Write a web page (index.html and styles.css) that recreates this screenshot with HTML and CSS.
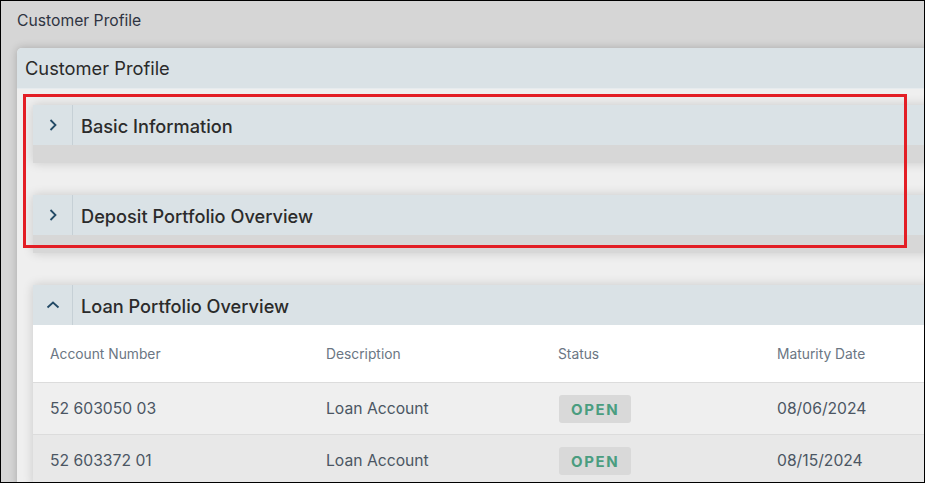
FILE: index.html
```html
<!DOCTYPE html>
<html>
<head>
<meta charset="utf-8">
<link rel="stylesheet" href="styles.css">
</head>
<body>
<div class="frame">
  <div class="page-title">Customer Profile</div>
  <div class="panel">
    <div class="panel-header">Customer Profile</div>
    <div class="panel-body">
      <div class="section collapsed">
        <div class="section-header">
          <div class="chev"><svg width="10" height="14" viewBox="0 0 10 14"><path d="M2.5 2 L7.5 7 L2.5 12" fill="none" stroke="#234a66" stroke-width="1.8"/></svg></div>
          <div class="section-title">Basic Information</div>
        </div>
      </div>
      <div class="section collapsed">
        <div class="section-header">
          <div class="chev"><svg width="10" height="14" viewBox="0 0 10 14"><path d="M2.5 2 L7.5 7 L2.5 12" fill="none" stroke="#234a66" stroke-width="1.8"/></svg></div>
          <div class="section-title">Deposit Portfolio Overview</div>
        </div>
      </div>
      <div class="section">
        <div class="section-header">
          <div class="chev"><svg width="14" height="10" viewBox="0 0 14 10"><path d="M1.5 7.5 L7 2.5 L12.5 7.5" fill="none" stroke="#234a66" stroke-width="1.8"/></svg></div>
          <div class="section-title">Loan Portfolio Overview</div>
        </div>
        <div class="table">
          <div class="row head">
            <div class="cell">Account Number</div>
            <div class="cell">Description</div>
            <div class="cell">Status</div>
            <div class="cell">Maturity Date</div>
          </div>
          <div class="row odd">
            <div class="cell">52 603050 03</div>
            <div class="cell">Loan Account</div>
            <div class="cell"><span class="badge">OPEN</span></div>
            <div class="cell">08/06/2024</div>
          </div>
          <div class="row even">
            <div class="cell">52 603372 01</div>
            <div class="cell">Loan Account</div>
            <div class="cell"><span class="badge">OPEN</span></div>
            <div class="cell">08/15/2024</div>
          </div>
        </div>
      </div>
    </div>
  </div>
  <div class="highlight"></div>
</div>
</body>
</html>
```

FILE: styles.css
```css
html, body {
  margin: 0;
  padding: 0;
}
body {
  font-family: Inter, "Noto Sans", "Liberation Sans", sans-serif;
  background: #d6d6d6;
}
.frame {
  position: relative;
  width: 925px;
  height: 483px;
  box-sizing: border-box;
  border: 1px solid #000;
  background: #d6d6d6;
  overflow: hidden;
}
.page-title {
  padding: 10px 0 0 16px;
  height: 20px;
  line-height: 20px;
  font-size: 15.7px;
  color: #2f3442;
}
.panel {
  margin: 17px -60px 0 16px;
  border-radius: 5px 0 0 0;
  box-shadow: 0 0 9px rgba(0, 0, 0, 0.22);
  background: #efefef;
}
.panel-header {
  height: 40px;
  line-height: 41px;
  padding-left: 8px;
  font-size: 18.3px;
  color: #2a2a2a;
  background: #dae2e6;
  border-radius: 5px 0 0 0;
  border-bottom: 1px solid #e6ebee;
}
.panel-body {
  padding: 16px 0 0 16px;
}
.section {
  margin-bottom: 32px;
  background: #d7d7d7;
  box-shadow: 0 0 10px rgba(0, 0, 0, 0.16);
}
.section.collapsed {
  padding-bottom: 18px;
}
.section-header {
  display: flex;
  height: 40px;
  background: #dae2e6;
}
.chev {
  width: 39px;
  border-right: 1px solid #c6d0d6;
  display: flex;
  align-items: center;
  justify-content: center;
}
.section-title {
  padding-left: 8px;
  line-height: 42px;
  font-size: 18.2px;
  font-weight: 500;
  color: #2b2b2b;
}
.table {
  background: #fff;
}
.row {
  display: grid;
  grid-template-columns: 276px 232px 219px 1fr;
  align-items: center;
  border-top: 1px solid #dcdcdc;
}
.row.head {
  height: 57px;
  background: #fff;
  border-top: none;
  font-size: 13.8px;
  color: #6b7683;
}
.row.odd {
  height: 51px;
  background: #efefef;
  font-size: 15.7px;
  color: #4b5663;
}
.row.even {
  height: 51px;
  background: #e8e8e8;
  font-size: 15.7px;
  color: #4b5663;
}
.cell {
  padding-left: 17px;
}
.badge {
  display: inline-block;
  height: 28px;
  line-height: 29px;
  padding: 0 12px;
  margin-left: 1px;
  border-radius: 3px;
  background: #d9d9d9;
  color: #4a9d80;
  font-weight: 700;
  font-size: 15px;
  letter-spacing: 1.6px;
}
.highlight {
  position: absolute;
  left: 22px;
  top: 93px;
  width: 878px;
  height: 148px;
  border: 3px solid #e31e25;
}
```
